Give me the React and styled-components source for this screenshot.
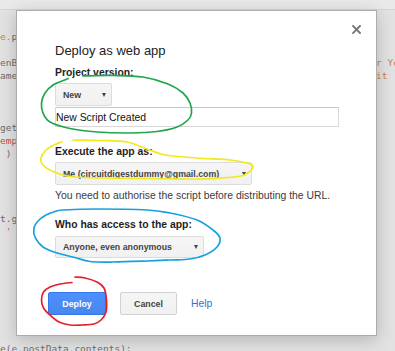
import React from 'react';
import styled, { createGlobalStyle } from 'styled-components';

const GlobalStyle = createGlobalStyle`
    html, body {
        margin: 0;
        padding: 0;
    }
    body {
        background: #e2e2e2;
        overflow: hidden;
        font-family: Arial, "Liberation Sans", sans-serif;
    }
`;

const C = {
    plain: '#6c6c6c',
    orange: '#c4874d',
    red: '#c2504b',
    blue: '#5573ab',
};

// what is left visible of the editor behind the dialog
const codeLines = [
    { left: [['e.', C.orange], ['parameter;', C.plain]] },
    {},
    { left: [['enById(', C.plain]], right: [['r Your', C.orange]] },
    { left: [['ame', C.plain]], right: [['it :', C.orange]] },
    {},
    {},
    {},
    { left: [['get', C.plain]] },
    { left: [['emp', C.red]] },
    { left: [[' )', C.plain]] },
    {},
    {},
    {},
    {},
    { left: [['t.g', C.plain]] },
    { left: [[" '", C.red]] },
    {},
    {},
    {},
    {},
    {},
    {},
    {},
    {},
    { left: [['e(', C.plain], ['e', C.blue], ['.postData.contents);', C.plain]] },
];

// hand drawn marks on the screenshot
const marks = [
    {
        color: '#22a64c',
        closed: false,
        pts: [
            [83, 76], [113, 75.5], [143, 77], [168, 84], [183, 93], [190, 103], [191.5, 113],
            [188, 120], [177, 127], [157, 131.5], [130, 133], [97, 132], [70, 128.5], [50, 122],
            [43, 113], [41.5, 103], [45, 93], [53, 85], [62, 81], [68, 78.5],
        ],
    },
    {
        color: '#f3e81a',
        closed: false,
        pts: [
            [73, 140], [100, 140.5], [127, 142], [147, 149], [165, 155], [197, 158], [230, 160],
            [247, 163], [253, 166], [249, 172], [241, 176], [220, 178], [195, 179], [150, 178.5],
            [100, 178], [70, 176.5], [54, 172], [43, 165], [41, 158], [46, 150], [55, 144.5], [62, 142],
        ],
    },
    {
        color: '#16a0e0',
        closed: true,
        pts: [
            [63, 210], [97, 209], [147, 210], [170, 213], [197, 220], [213, 230], [220, 238],
            [217, 247], [205, 255], [190, 259], [170, 260], [147, 261], [113, 262], [90, 261.5],
            [75, 257.5], [57, 253], [43, 247], [35, 237], [34, 228], [38, 221], [46, 215], [55, 211.5],
        ],
    },
    {
        color: '#e4202b',
        closed: false,
        pts: [
            [75, 277], [85, 278], [97, 282], [104, 288], [106.5, 300], [106, 312], [101, 320],
            [94, 324], [82, 325], [70, 325], [59, 322], [50, 315], [43.5, 308], [41.5, 300],
            [43.5, 292], [50, 287], [60, 284], [72, 282.5],
        ],
    },
];

const smooth = (pts, closed) => {
    const n = pts.length;
    const p = closed
        ? [pts[n - 1], ...pts, pts[0], pts[1]]
        : [pts[0], ...pts, pts[n - 1]];
    let d = `M${p[1][0]},${p[1][1]}`;
    for (let i = 1; i < p.length - 2; i++) {
        const [x0, y0] = p[i - 1];
        const [x1, y1] = p[i];
        const [x2, y2] = p[i + 1];
        const [x3, y3] = p[i + 2];
        d += ` C${x1 + (x2 - x0) / 6},${y1 + (y2 - y0) / 6} ${x2 - (x3 - x1) / 6},${y2 - (y3 - y1) / 6} ${x2},${y2}`;
    }
    return d;
};

const Select = ({ children, width, height, top }) => (
    <SelectBox $w={width} $h={height} $mt={top}>
        <span>{children}</span>
        <Arrow />
    </SelectBox>
);

const App = () => {
    return (
        <>
            <GlobalStyle />
            <Page>
                <TabBar />
                <Code>
                    {codeLines.map((line, i) => (
                        <CodeLine key={i}>
                            <span>
                                {(line.left || []).map(([t, c], j) => (
                                    <Tok key={j} $c={c}>{t}</Tok>
                                ))}
                            </span>
                            <span>
                                {(line.right || []).map(([t, c], j) => (
                                    <Tok key={j} $c={c}>{t}</Tok>
                                ))}
                            </span>
                        </CodeLine>
                    ))}
                </Code>

                <Dialog>
                    <Close aria-label="Close">
                        <svg width="9" height="9" viewBox="0 0 9 9">
                            <path d="M1 1L8 8M8 1L1 8" stroke="#777" strokeWidth="1.9" strokeLinecap="square" />
                        </svg>
                    </Close>

                    <Title>Deploy as web app</Title>

                    <Label $mt={9}>Project version:</Label>
                    <Select width={57} height={23} top={4}>New</Select>
                    <TextInput readOnly value="New Script Created" />

                    <Label $mt={19}>Execute the app as:</Label>
                    <Select width={197} height={23} top={4}>Me (circuitdigestdummy@gmail.com)</Select>
                    <Hint>You need to authorise the script before distributing the URL.</Hint>

                    <Label $mt={17}>Who has access to the app:</Label>
                    <Select width={149} height={22} top={5}>Anyone, even anonymous</Select>

                    <Actions>
                        <Button $primary $w={58}>Deploy</Button>
                        <Button $w={57}>Cancel</Button>
                        <HelpLink href="#">Help</HelpLink>
                    </Actions>
                </Dialog>

                <Marks width="395" height="351" viewBox="0 0 395 351">
                    {marks.map((m, i) => (
                        <path
                            key={i}
                            d={smooth(m.pts, m.closed)}
                            fill="none"
                            stroke={m.color}
                            strokeWidth="1.7"
                            strokeLinecap="round"
                            strokeLinejoin="round"
                        />
                    ))}
                </Marks>
            </Page>
        </>
    );
};

const Page = styled.div`
    position: relative;
    width: 395px;
    height: 351px;
    overflow: hidden;
    background: #e2e2e2;
`;

const TabBar = styled.div`
    height: 9px;
    background: #e9e9e9;
    border-bottom: 1px solid #d6d6d6;
`;

const Code = styled.div`
    padding-top: 20px;
    font-family: "DejaVu Sans Mono", "Liberation Mono", monospace;
    font-size: 9.5px;
    line-height: 13px;
    color: #6c6c6c;
`;

const CodeLine = styled.div`
    display: grid;
    grid-template-columns: 376px 1fr;
    height: 13px;
    white-space: pre;
    overflow: hidden;

    span {
        overflow: hidden;
    }
`;

const Tok = styled.span`
    color: ${(p) => p.$c};
`;

const Dialog = styled.div`
    position: absolute;
    left: 16px;
    top: 10px;
    width: 361px;
    height: 326px;
    box-sizing: border-box;
    padding: 32px 38px 0;
    display: flex;
    flex-direction: column;
    align-items: flex-start;
    background: #fff;
    border: 1px solid #acacac;
    box-shadow: 0 4px 16px rgba(0, 0, 0, 0.2);
    font-family: Arial, "Liberation Sans", sans-serif;
    color: #222;
`;

const Close = styled.div`
    position: absolute;
    top: 14px;
    right: 15px;
    width: 9px;
    height: 9px;
    display: flex;
    cursor: pointer;
`;

const Title = styled.h2`
    margin: 0;
    font-size: 13px;
    line-height: 15px;
    font-weight: normal;
    color: #222;
`;

const Label = styled.div`
    margin-top: ${(p) => p.$mt}px;
    font-size: 10.4px;
    line-height: 12px;
    font-weight: bold;
    color: #1f1f1f;
`;

const SelectBox = styled.div`
    margin-top: ${(p) => p.$mt}px;
    width: ${(p) => p.$w}px;
    height: ${(p) => p.$h}px;
    box-sizing: border-box;
    padding: 0 5px 0 7px;
    display: flex;
    align-items: center;
    justify-content: space-between;
    background: linear-gradient(#f5f5f5, #f1f1f1);
    border: 1px solid #dcdcdc;
    border-radius: 2px;
    color: #444;
    font-size: 8.8px;
    font-weight: bold;
    white-space: nowrap;
`;

const Arrow = styled.i`
    width: 0;
    height: 0;
    border-left: 2.5px solid transparent;
    border-right: 2.5px solid transparent;
    border-top: 4.5px solid #444;
`;

const TextInput = styled.input`
    margin-top: 1px;
    width: 284px;
    height: 20px;
    box-sizing: border-box;
    padding: 0;
    border: 1px solid #d9d9d9;
    border-top-color: #c6c6c6;
    border-radius: 1px;
    font-family: Arial, "Liberation Sans", sans-serif;
    font-size: 10.4px;
    color: #111;
    outline: none;
`;

const Hint = styled.div`
    margin-top: 5px;
    font-size: 10.4px;
    line-height: 12px;
    color: #3a3a3a;
`;

const Actions = styled.div`
    margin-top: 34px;
    margin-left: -7px;
    display: flex;
    align-items: center;
    gap: 14px;
`;

const Button = styled.div`
    width: ${(p) => p.$w}px;
    height: 23px;
    box-sizing: border-box;
    display: flex;
    align-items: center;
    justify-content: center;
    border-radius: 2px;
    font-size: 8.8px;
    font-weight: bold;
    cursor: pointer;
    background: ${(p) => (p.$primary ? 'linear-gradient(#4d90fe, #4787ed)' : 'linear-gradient(#f5f5f5, #f1f1f1)')};
    border: 1px solid ${(p) => (p.$primary ? '#3079ed' : '#d2d2d2')};
    color: ${(p) => (p.$primary ? '#fff' : '#444')};
`;

const HelpLink = styled.a`
    font-size: 10.4px;
    color: #2f6fdc;
    text-decoration: none;
`;

const Marks = styled.svg`
    position: absolute;
    left: 0;
    top: 0;
    pointer-events: none;
`;

export default App;
